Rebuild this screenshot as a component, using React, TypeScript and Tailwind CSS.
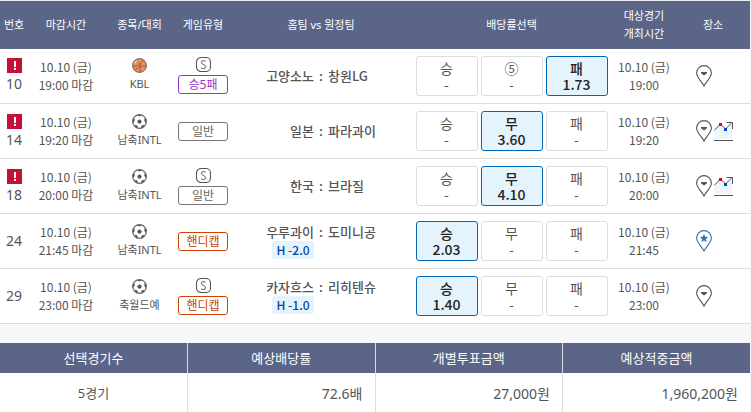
import cn from 'clsx'

type Outcome = { label: string; odds?: string }

type Match = {
  no: number
  hot?: boolean
  closes: string
  starts: string
  sport: 'basketball' | 'soccer'
  league: string
  single?: boolean
  type: '승5패' | '일반' | '핸디캡'
  home: string
  away: string
  handicap?: string
  outcomes: Outcome[]
  neutral?: boolean
  chart?: boolean
}

const matches: Match[] = [
  {
    no: 10,
    hot: true,
    closes: '19:00 마감',
    starts: '19:00',
    sport: 'basketball',
    league: 'KBL',
    single: true,
    type: '승5패',
    home: '고양소노',
    away: '창원LG',
    outcomes: [{ label: '승' }, { label: '⑤' }, { label: '패', odds: '1.73' }],
  },
  {
    no: 14,
    hot: true,
    closes: '19:20 마감',
    starts: '19:20',
    sport: 'soccer',
    league: '남축INTL',
    type: '일반',
    home: '일본',
    away: '파라과이',
    outcomes: [{ label: '승' }, { label: '무', odds: '3.60' }, { label: '패' }],
    chart: true,
  },
  {
    no: 18,
    hot: true,
    closes: '20:00 마감',
    starts: '20:00',
    sport: 'soccer',
    league: '남축INTL',
    single: true,
    type: '일반',
    home: '한국',
    away: '브라질',
    outcomes: [{ label: '승' }, { label: '무', odds: '4.10' }, { label: '패' }],
    chart: true,
  },
  {
    no: 24,
    closes: '21:45 마감',
    starts: '21:45',
    sport: 'soccer',
    league: '남축INTL',
    type: '핸디캡',
    home: '우루과이',
    away: '도미니공',
    handicap: 'H -2.0',
    outcomes: [{ label: '승', odds: '2.03' }, { label: '무' }, { label: '패' }],
    neutral: true,
  },
  {
    no: 29,
    closes: '23:00 마감',
    starts: '23:00',
    sport: 'soccer',
    league: '축월드예',
    single: true,
    type: '핸디캡',
    home: '카자흐스',
    away: '리히텐슈',
    handicap: 'H -1.0',
    outcomes: [{ label: '승', odds: '1.40' }, { label: '무' }, { label: '패' }],
  },
]

const summary = [
  { label: '선택경기수', value: '5경기' },
  { label: '예상배당률', value: '72.6배' },
  { label: '개별투표금액', value: '27,000원' },
  { label: '예상적중금액', value: '1,960,200원' },
]

const typeStyles = {
  승5패: 'border-[#9a34cf] text-[#9a34cf]',
  일반: 'border-[#777] text-[#666]',
  핸디캡: 'border-[#cc4400] text-[#cc4400]',
}

const HotIcon = () => (
  <svg viewBox="0 0 15 15" className="size-[15px]" role="img" aria-label="주의">
    <path d="M0 0h15v15H0z" fill="#c4113a" />
    <path d="M7 3h2v6H7zM7 10h2v2H7z" fill="#fff" />
  </svg>
)

const BasketballIcon = () => (
  <svg viewBox="0 0 15 15" className="size-[15px]" fill="none" aria-hidden>
    <circle cx="7.5" cy="7.5" r="6.9" fill="#ee8f5c" stroke="#6b5a52" />
    <path d="M2.500 5.500c1-2 2.500-3 4.500-3.300" stroke="#fbd3b6" strokeWidth="1.200" />
    <path
      d="M1 8c4.500.5 8-1.500 10-5.500M5 2c3 2.500 4 7 3 12M3 12.500c2.500-3.500 6-5 11-4.500"
      stroke="#7a4a36"
      strokeWidth=".7"
    />
  </svg>
)

const SoccerIcon = () => (
  <svg viewBox="0 0 15 15" className="size-[15px]" fill="none" aria-hidden>
    <circle cx="7.5" cy="7.5" r="6.8" fill="#fff" stroke="#666" strokeWidth="1.200" />
    <path
      d="m7.500 5.200 2.300 1.700-.9 2.700H6.100l-.9-2.700zM5 .9h5L7.500 2.600zM.8 5.500 2.800 4.500l-.3 2.700L.7 9zM14.200 5.500l-2-1 .3 2.700 1.800 1.800zM2.500 12l1.300-1.200 1.900 1.300-.2 2.100zM12.500 12l-1.300-1.200-1.900 1.300.2 2.100z"
      fill="#555"
    />
  </svg>
)

const SingleIcon = () => (
  <svg viewBox="0 0 15 15" className="size-[15px]" fill="none" stroke="#555" role="img" aria-label="싱글">
    <rect x=".5" y=".5" width="14" height="14" rx="4.500" strokeWidth="1.100" />
    <path d="M9.500 4.200C8.300 3.400 5.300 3.200 5.300 5.400c0 2.100 4.300 1.900 4.300 4.300 0 2.200-3 2.200-4.600 1.200" />
  </svg>
)

const PinIcon = ({ neutral }: { neutral?: boolean }) => (
  <svg
    viewBox="0 0 16 22"
    className={cn('h-[22px] w-4', neutral ? 'text-[#2e75b6]' : 'text-[#555]')}
    fill="none"
  >
    <path
      d="M8 21C6.500 17.500.6 12.500.6 8a7.400 7.400 0 0 1 14.800 0c0 4.500-5.900 9.500-7.400 13z"
      stroke="currentColor"
      strokeWidth="1.100"
    />
    {neutral ? (
      <path
        d="m8 4 1.200 2.800 3 .2-2.300 2 .8 3L8 10.400 5.300 12l.8-3-2.300-2 3-.2z"
        fill="currentColor"
      />
    ) : (
      <path d="M5 7h6v1.200L8 10.400 5 8.200z" fill="currentColor" />
    )}
  </svg>
)

const ChartIcon = () => (
  <svg viewBox="0 0 19 20" className="h-5 w-[19px]" fill="none">
    <path d="M0 10 6 3l5 5 7-5v15H0z" fill="#eef6fd" />
    <path d="M0 9.500 6.500 3l5 5L18 1.500M12.500 1.500h6V8M0 19.500h19" stroke="#555" />
    <path d="M5 2h3v3H5z" fill="#e60012" />
    <path d="M10 7h3v3h-3z" fill="#0044cc" />
  </svg>
)

const OddsButton = ({ label, odds }: Outcome) => (
  <button
    type="button"
    aria-pressed={!!odds}
    className={cn(
      "flex h-10 w-[62px] flex-col items-center justify-center rounded-[3px] border font-['Noto_Sans_CJK_KR',sans-serif] text-sm leading-4",
      odds
        ? 'border-[#0068b7] bg-[#e5f3fc] font-medium text-[#222]'
        : 'border-[#ddd] bg-white text-[#555]',
    )}
  >
    <span>{label}</span>
    <span>{odds ?? '-'}</span>
  </button>
)

const MatchRow = ({ match }: { match: Match }) => (
  <tr className="h-[55px] border-b border-[#ddd]">
    <td className="text-sm leading-[18px]">
      <div className="flex flex-col items-center gap-0.5">
        {match.hot && <HotIcon />}
        {match.no}
      </div>
    </td>
    <td className="font-['Noto_Sans_CJK_KR',sans-serif]">
      <div>10.10 (금)</div>
      <div>{match.closes}</div>
    </td>
    <td className="text-[11px]">
      <div className="flex flex-col items-center gap-0.5">
        {match.sport === 'basketball' ? <BasketballIcon /> : <SoccerIcon />}
        <span>{match.league}</span>
      </div>
    </td>
    <td>
      <div className="flex flex-col items-center gap-[3px]">
        {match.single && <SingleIcon />}
        <span
          className={cn(
            'h-[19px] w-[50px] rounded-[3px] border leading-[17px]',
            typeStyles[match.type],
          )}
        >
          {match.type}
        </span>
      </div>
    </td>
    <td>
      <div className="grid grid-cols-[1fr_14px_1fr] font-['Noto_Sans_CJK_KR',sans-serif] text-[13px] font-medium">
        <div className="text-right">{match.home}</div>
        <div>:</div>
        <div className="text-left">{match.away}</div>
        {match.handicap && (
          <div className="w-[42px] justify-self-end rounded-[3px] bg-[#e5f3fc] text-center text-xs leading-[18px] text-[#0047a5]">
            {match.handicap}
          </div>
        )}
      </div>
    </td>
    <td>
      <div className="flex justify-center gap-[3px]">
        {match.outcomes.map((outcome) => (
          <OddsButton key={outcome.label} {...outcome} />
        ))}
      </div>
    </td>
    <td className="font-['Noto_Sans_CJK_KR',sans-serif]">
      <div>10.10 (금)</div>
      <div>{match.starts}</div>
    </td>
    <td>
      <div className="flex items-center gap-0.5 pl-5">
        <button type="button" aria-label="경기장 정보">
          <PinIcon neutral={match.neutral} />
        </button>
        {match.chart && (
          <button type="button" aria-label="배당률 변동">
            <ChartIcon />
          </button>
        )}
      </div>
    </td>
  </tr>
)

export default function App() {
  return (
    <main className="bg-[#f7f7f7] pr-px font-['Noto_Sans','Noto_Sans_CJK_KR',sans-serif] text-xs leading-[18px] text-[#555]">
      <table className="w-full table-fixed border-collapse border-t border-[#eee] bg-white text-center">
        <colgroup>
          <col className="w-7" />
          <col className="w-[76px]" />
          <col className="w-[71px]" />
          <col className="w-14" />
          <col />
          <col className="w-[201px]" />
          <col className="w-16" />
          <col className="w-[74px]" />
        </colgroup>
        <thead>
          <tr className="h-12 bg-[#5a6587] text-[11px] text-white *:font-normal">
            <th scope="col">번호</th>
            <th scope="col">마감시간</th>
            <th scope="col">종목/대회</th>
            <th scope="col">게임유형</th>
            <th scope="col">홈팀 vs 원정팀</th>
            <th scope="col">배당률선택</th>
            <th scope="col">
              대상경기
              <br />
              개최시간
            </th>
            <th scope="col">장소</th>
          </tr>
        </thead>
        <tbody>
          {matches.map((match) => (
            <MatchRow key={match.no} match={match} />
          ))}
        </tbody>
      </table>

      <table className="mt-[19px] w-full table-fixed border-collapse bg-white text-[13px]">
        <thead>
          <tr className="h-[30px] bg-[#5a6587] text-white">
            {summary.map(({ label }) => (
              <th
                key={label}
                scope="col"
                className="border-r border-[#ddd] font-normal last:border-r-0"
              >
                {label}
              </th>
            ))}
          </tr>
        </thead>
        <tbody>
          <tr className="h-[39px]">
            {summary.map(({ label, value }) => (
              <td
                key={label}
                className="border-r border-[#ddd] pt-0.5 pr-3 text-right text-sm first:pr-0 first:text-center first:text-[13px] last:border-r-0"
              >
                {value}
              </td>
            ))}
          </tr>
        </tbody>
      </table>
    </main>
  )
}
